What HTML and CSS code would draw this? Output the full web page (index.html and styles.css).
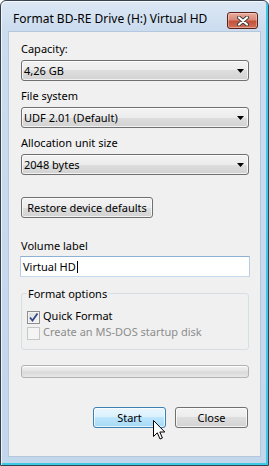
FILE: index.html
```html
<!DOCTYPE html>
<html lang="en">
<head>
    <meta charset="UTF-8">
    <title>Format BD-RE Drive (H:) Virtual HD</title>
    <link rel="stylesheet" href="styles.css">
</head>
<body>
    <div class="window">
        <div class="titlebar">
            <span class="title">Format BD-RE Drive (H:) Virtual HD</span>
            <button class="close-btn" aria-label="Close">
                <svg width="14" height="10" viewBox="0 0 14 10">
                    <path d="M3 1.5 L11 8.5 M11 1.5 L3 8.5" stroke="#3a3a3a" stroke-width="4" stroke-linecap="round"/>
                    <path d="M3 1.5 L11 8.5 M11 1.5 L3 8.5" stroke="#fff" stroke-width="2.2" stroke-linecap="round"/>
                </svg>
            </button>
        </div>

        <div class="client">
            <label class="field-label">Capacity:</label>
            <div class="combo">
                <span>4,26 GB</span>
                <svg class="combo-arrow" width="7" height="4" viewBox="0 0 7 4"><path d="M0 0 H7 L3.5 4 Z" fill="#000"/></svg>
            </div>

            <label class="field-label">File system</label>
            <div class="combo">
                <span>UDF 2.01 (Default)</span>
                <svg class="combo-arrow" width="7" height="4" viewBox="0 0 7 4"><path d="M0 0 H7 L3.5 4 Z" fill="#000"/></svg>
            </div>

            <label class="field-label">Allocation unit size</label>
            <div class="combo">
                <span>2048 bytes</span>
                <svg class="combo-arrow" width="7" height="4" viewBox="0 0 7 4"><path d="M0 0 H7 L3.5 4 Z" fill="#000"/></svg>
            </div>

            <button class="btn btn-restore">Restore device defaults</button>

            <label class="field-label field-label-volume">Volume label</label>
            <div class="textbox">Virtual HD<span class="caret"></span></div>

            <fieldset class="group">
                <legend>Format options</legend>
                <div class="check-row">
                    <span class="checkbox">
                        <svg width="11" height="11" viewBox="0 0 11 11"><path d="M2 5.5 L4.5 8.5 L9.5 1.5" fill="none" stroke="#2f4a86" stroke-width="1.8"/></svg>
                    </span>
                    Quick Format
                </div>
                <div class="check-row check-row-disabled">
                    <span class="checkbox"></span>
                    Create an MS-DOS startup disk
                </div>
            </fieldset>

            <div class="progress"></div>

            <div class="actions">
                <button class="btn btn-start">Start</button>
                <button class="btn">Close</button>
            </div>
        </div>

        <!-- mouse pointer hovering the Start button -->
        <svg class="cursor" width="13" height="21" viewBox="0 0 13 21">
            <path d="M0.5 0.5 L0.5 16.5 L4.3 12.8 L7 19 L9.4 18 L6.8 12 L11.8 12 Z" fill="#fff" stroke="#000" stroke-width="1" stroke-linejoin="miter"/>
        </svg>
    </div>
</body>
</html>
```

FILE: styles.css
```css
* {
    box-sizing: border-box;
}

body {
    margin: 0;
    background-color: #fff;
    font-family: 'Segoe UI', 'Noto Sans', sans-serif;
    font-size: 11px;
    color: #000;
}

.window {
    position: relative;
    width: 269px;
    height: 466px;
    padding: 0 7px;
    border: 1px solid #36414f;
    border-radius: 6px 6px 0 0;
    background: linear-gradient(to bottom, #dce7f4 0, #cbdcef 30px, #c2d6ec 100%);
    box-shadow: inset 1px 1px 0 rgba(255,255,255,0.7), inset -2px -2px 0 #3cc9e6;
}

.titlebar {
    height: 30px;
    display: flex;
    align-items: flex-start;
    justify-content: space-between;
    padding-left: 5px;
}

.title {
    margin-top: 10px;
    font-size: 12px;
    line-height: 15px;
    white-space: nowrap;
}

.close-btn {
    width: 31px;
    height: 17px;
    margin-top: 11px;
    margin-right: 3px;
    padding: 0;
    border: 1px solid #5b2019;
    border-radius: 3px;
    background: linear-gradient(to bottom, #eaab9c 0, #d98a78 45%, #c4513a 55%, #d17158 100%);
    box-shadow: inset 0 0 0 1px rgba(255,255,255,0.35);
    display: flex;
    align-items: center;
    justify-content: center;
}

.client {
    height: 426px;
    padding: 9px 11px 0 12px;
    border: 1px solid #b4c7dd;
    background-color: #f0f0f0;
    display: flex;
    flex-direction: column;
}

.field-label {
    display: block;
    height: 15px;
    line-height: 15px;
    margin-bottom: 4px;
}

.combo {
    height: 21px;
    margin-bottom: 7px;
    padding: 0 4px 0 2px;
    border: 1px solid #707070;
    border-radius: 3px;
    background: linear-gradient(to bottom, #f3f3f3 0, #ececec 50%, #dedede 50%, #d2d2d2 100%);
    box-shadow: inset 0 0 0 1px rgba(255,255,255,0.7);
    display: flex;
    align-items: center;
    justify-content: space-between;
    line-height: 15px;
}

.combo-arrow {
    display: block;
}

.btn {
    height: 21px;
    padding: 0;
    border: 1px solid #707070;
    border-radius: 3px;
    background: linear-gradient(to bottom, #f3f3f3 0, #ececec 50%, #dedede 50%, #d2d2d2 100%);
    box-shadow: inset 0 0 0 1px rgba(255,255,255,0.7);
    font: inherit;
    line-height: 15px;
    color: #000;
}

.btn-restore {
    width: 132px;
    margin-top: 15px;
    align-self: flex-start;
}

.field-label-volume {
    margin-top: 20px;
    margin-bottom: 3px;
}

.textbox {
    height: 21px;
    width: 230px;
    margin-left: -1px;
    padding-left: 2px;
    border: 1px solid;
    border-color: #8db0d5 #b5cde6 #c6d9ec #b5cde6;
    background-color: #fff;
    display: flex;
    align-items: center;
    line-height: 15px;
}

.caret {
    display: inline-block;
    width: 1px;
    height: 12px;
    margin-left: 1px;
    background-color: #000;
}

.group {
    margin: 9px 0 0;
    padding: 7px 5px 9px;
    border: 1px solid #d5dfe5;
    border-radius: 3px;
}

.group legend {
    padding: 0 1px;
    line-height: 15px;
}

.check-row {
    height: 16px;
    line-height: 16px;
    display: flex;
    align-items: flex-start;
}

.checkbox {
    width: 13px;
    height: 13px;
    margin-top: 3px;
    margin-right: 3px;
    border: 1px solid #8e8f8f;
    background: linear-gradient(135deg, #dcdcdc 0, #f6f6f6 100%);
    box-shadow: inset 0 0 0 1px #f4f4f4;
    display: flex;
    align-items: center;
    justify-content: center;
}

.check-row-disabled {
    color: #8d8d8d;
}

.check-row-disabled .checkbox {
    border-color: #c7c7c7;
    background: #f4f4f4;
    box-shadow: none;
}

.progress {
    height: 13px;
    margin-top: 15px;
    border: 1px solid #b2b2b2;
    border-radius: 3px;
    background: linear-gradient(to bottom, #f2f2f2 0, #e4e4e4 45%, #d9d9d9 55%, #e8e8e8 100%);
    box-shadow: inset 0 1px 0 rgba(255,255,255,0.8);
}

.actions {
    margin-top: 29px;
    margin-right: 1px;
    display: flex;
    justify-content: flex-end;
    gap: 9px;
}

.actions .btn {
    width: 73px;
}

.btn-start {
    border-color: #3c7fb1;
    background: linear-gradient(to bottom, #eaf6fd 0, #d9f0fc 50%, #bee6fd 50%, #a7d9f5 100%);
}

.cursor {
    position: absolute;
    left: 152px;
    top: 419px;
}
```
